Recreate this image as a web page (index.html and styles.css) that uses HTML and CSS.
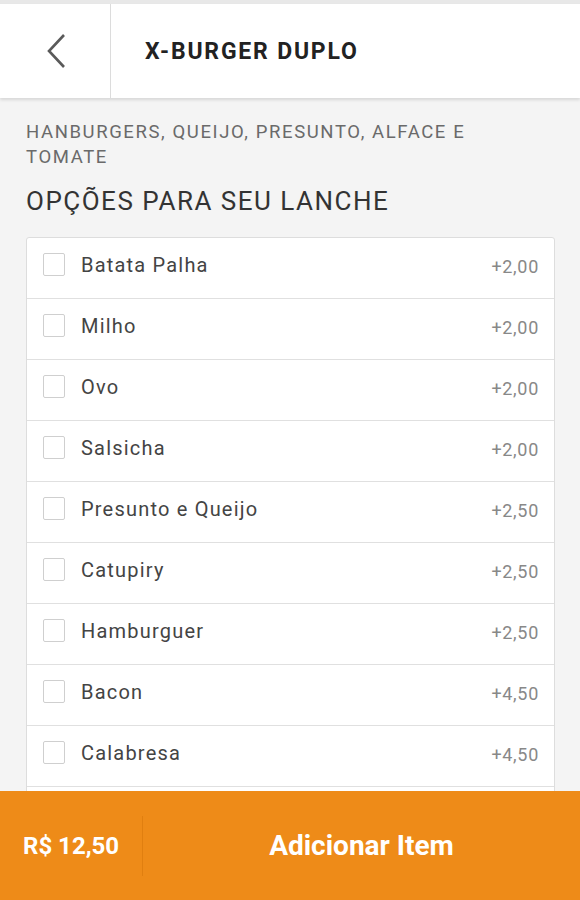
FILE: index.html
```html
<!DOCTYPE html>
<html lang="pt-BR">
<head>
    <meta charset="UTF-8">
    <title>X-Burger Duplo</title>
    <link rel="stylesheet" href="styles.css">
</head>
<body>
    <div class="status-strip"></div>
    <header class="top-bar">
        <div class="back-btn">
            <svg width="22" height="36" viewBox="0 0 22 36"><path d="M19 2 L4 18 L19 34" fill="none" stroke="#5a5a5a" stroke-width="2.6"/></svg>
        </div>
        <h1 class="title">X-BURGER DUPLO</h1>
    </header>
    <main class="content">
        <p class="desc">HANBURGERS, QUEIJO, PRESUNTO, ALFACE E TOMATE</p>
        <h2 class="section-title">OPÇÕES PARA SEU LANCHE</h2>
        <ul class="options">
            <li class="option"><span class="check"></span><span class="name">Batata Palha</span><span class="price">+2,00</span></li>
            <li class="option"><span class="check"></span><span class="name">Milho</span><span class="price">+2,00</span></li>
            <li class="option"><span class="check"></span><span class="name">Ovo</span><span class="price">+2,00</span></li>
            <li class="option"><span class="check"></span><span class="name">Salsicha</span><span class="price">+2,00</span></li>
            <li class="option"><span class="check"></span><span class="name">Presunto e Queijo</span><span class="price">+2,50</span></li>
            <li class="option"><span class="check"></span><span class="name">Catupiry</span><span class="price">+2,50</span></li>
            <li class="option"><span class="check"></span><span class="name">Hamburguer</span><span class="price">+2,50</span></li>
            <li class="option"><span class="check"></span><span class="name">Bacon</span><span class="price">+4,50</span></li>
            <li class="option"><span class="check"></span><span class="name">Calabresa</span><span class="price">+4,50</span></li>
            <li class="option"><span class="check"></span><span class="name">Cheddar</span><span class="price">+4,50</span></li>
        </ul>
    </main>
    <footer class="bottom-bar">
        <div class="total">R$ 12,50</div>
        <div class="add-btn">Adicionar Item</div>
    </footer>
</body>
</html>
```

FILE: styles.css
```css
body {
    font-family: Roboto, 'Noto Sans', Arial, sans-serif;
    margin: 0;
    background: #f4f4f4;
    overflow: hidden;
}
.status-strip {
    height: 4px;
    background: #e8e8e8;
}
.top-bar {
    display: flex;
    align-items: stretch;
    height: 94px;
    background: #fff;
    box-shadow: 0 2px 3px rgba(0,0,0,0.12);
    position: relative;
    z-index: 1;
}
.back-btn {
    width: 111px;
    border-right: 1px solid #dcdcdc;
    display: flex;
    align-items: center;
    justify-content: center;
    box-sizing: border-box;
    padding-left: 2px;
}
.title {
    margin: 0;
    padding-left: 34px;
    display: flex;
    align-items: center;
    font-size: 23px;
    font-weight: 700;
    letter-spacing: 1.8px;
    color: #222;
}
.content {
    padding: 22px 25px 0 26px;
}
.desc {
    margin: 0;
    padding-right: 20px;
    font-size: 18.5px;
    line-height: 25px;
    letter-spacing: 1.6px;
    color: #6a6a6a;
}
.section-title {
    margin: 16px 0 0 0;
    font-size: 26px;
    font-weight: 400;
    line-height: 30px;
    letter-spacing: 1.5px;
    color: #333;
}
.options {
    list-style: none;
    margin: 21px 0 0 0;
    padding: 0;
    background: #fff;
    border: 1px solid #dddddd;
    border-radius: 3px;
}
.option {
    display: flex;
    align-items: center;
    height: 60px;
    padding: 0 15px 0 16px;
    border-bottom: 1px solid #e0e0e0;
}
.check {
    width: 20px;
    height: 21px;
    border: 1px solid #cfcfcf;
    border-radius: 2px;
    margin: -7px 16px 0 0;
    box-sizing: content-box;
}
.name {
    flex: 1;
    font-size: 20px;
    letter-spacing: 1.2px;
    color: #444;
    margin-top: -6px;
}
.price {
    font-size: 18px;
    letter-spacing: 0.7px;
    color: #888;
    margin-top: -3px;
}
.bottom-bar {
    position: fixed;
    left: 0;
    right: 0;
    bottom: 0;
    height: 109px;
    background: #ee8b18;
    display: flex;
    align-items: center;
    color: #fff;
    font-weight: 700;
}
.total {
    width: 143px;
    box-sizing: border-box;
    padding-left: 23px;
    font-size: 24px;
    height: 60px;
    display: flex;
    align-items: center;
    border-right: 1px solid #e07f10;
}
.add-btn {
    flex: 1;
    text-align: center;
    font-size: 28px;
}
```
